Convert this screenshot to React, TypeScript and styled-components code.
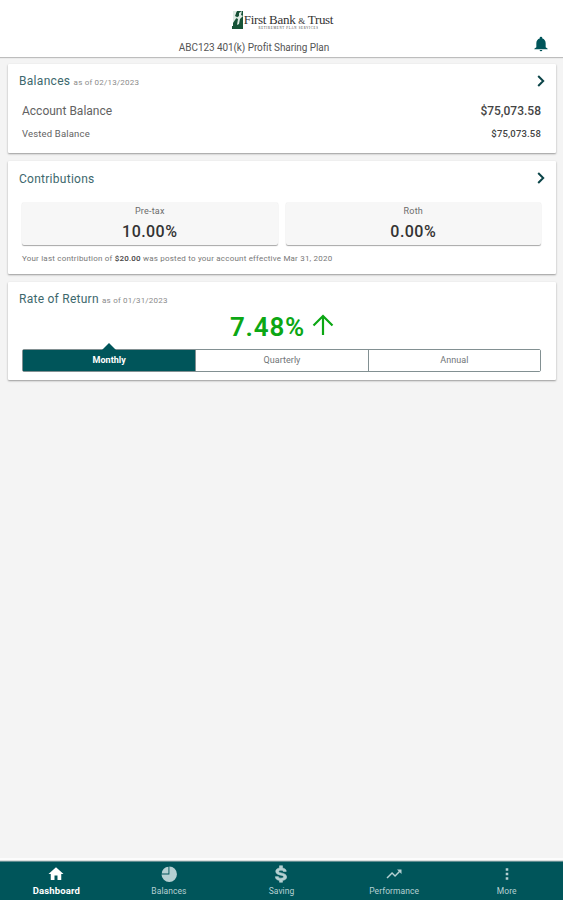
import React from "react";
import styled, { createGlobalStyle } from "styled-components";

const teal = "#00555a";

const GlobalStyle = createGlobalStyle`
  * { box-sizing: border-box; }
  body { margin: 0; background: #f4f4f4; font-family: Roboto, "Liberation Sans", sans-serif; }
`;

const Page = styled.div`
  display: flex;
  flex-direction: column;
  height: 100vh;
  min-height: 900px;
  background: #f4f4f4;
  color: #555;
`;

const Header = styled.header`
  height: 57px;
  flex: none;
  padding-top: 9px;
  background: #fff;
  box-shadow: 0 1px 1px #bdbdbd;
`;

const Brand = styled.div`
  display: flex;
  justify-content: center;
  height: 22px;
  padding-left: 2px;
`;

const BrandMark = styled.svg`
  width: 12px;
  height: 20px;
  margin-top: 1px;
`;

const BrandWords = styled.div`
  display: flex;
  flex-direction: column;
  align-items: center;
  width: 90px;
  font-family: "Liberation Serif", serif;
  color: #333;
`;

const BrandName = styled.div`
  font-size: 13px;
  line-height: 15px;
  margin-top: 3px;
  letter-spacing: -0.3px;
  white-space: nowrap;
  small { font-size: 9px; }
`;

const BrandLine = styled.div`
  font-size: 3px;
  line-height: 3px;
  margin-top: -2px;
  letter-spacing: 0.75px;
  white-space: nowrap;
`;

const PlanRow = styled.div`
  display: grid;
  grid-template-columns: 508px 1fr;
  align-items: center;
  margin-top: 5px;
  height: 18px;
`;

const PlanName = styled.div`
  text-align: center;
  font-size: 10px;
  line-height: 12px;
  margin-top: 5px;
  letter-spacing: -0.08px;
`;

const Bell = styled.svg`
  width: 16px;
  height: 16px;
  margin: -3px 0 0 25px;
`;

const Cards = styled.main`
  flex: 1;
  display: flex;
  flex-direction: column;
  gap: 8px;
  padding: 7px 7px 0 8px;
`;

const Card = styled.section<{ $height: number }>`
  height: ${(p) => p.$height}px;
  padding: 9px 15px 0 11px;
  border-radius: 1px;
  background: #fff;
  box-shadow: 0 1px 2px rgba(0, 0, 0, 0.38);
`;

const CardHead = styled.div`
  display: flex;
  align-items: center;
  justify-content: space-between;
  height: 17px;
`;

const Title = styled.h2<{ $spacing: number }>`
  margin: 0;
  font-size: 12px;
  line-height: 16px;
  font-weight: 400;
  letter-spacing: ${(p) => p.$spacing}px;
  color: #3d686d;
`;

const AsOf = styled.span`
  font-size: 8px;
  letter-spacing: 0.2px;
  color: #8b8b8b;
`;

const Chevron = styled.svg`
  width: 8px;
  height: 12px;
  margin: -1px -4px 0 0;
`;

const Line = styled.div<{ $size: number; $top: number; $spacing: number }>`
  display: flex;
  justify-content: space-between;
  margin: ${(p) => p.$top}px 0 0 3px;
  font-size: ${(p) => p.$size}px;
  line-height: 16px;
  letter-spacing: ${(p) => p.$spacing}px;
  color: #626262;
  b { font-weight: 500; color: #444; }
`;

const Tiles = styled.div`
  display: grid;
  grid-template-columns: 1fr 1fr;
  gap: 8px;
  margin: 15px 0 0 3px;
`;

const Tile = styled.div`
  height: 43px;
  padding-top: 3px;
  border-radius: 2px;
  background: #f7f7f7;
  box-shadow: 0 1px 1px rgba(0, 0, 0, 0.35);
  text-align: center;
`;

const TileLabel = styled.div`
  font-size: 9px;
  line-height: 13px;
  letter-spacing: 0.2px;
  color: #6b6b6b;
`;

const TileValue = styled.div`
  font-size: 16px;
  line-height: 20px;
  margin-top: 4px;
  font-weight: 500;
  letter-spacing: 0.45px;
  color: #333;
`;

const Note = styled.p`
  margin: 8px 0 0 3px;
  font-size: 8px;
  line-height: 12px;
  letter-spacing: 0.2px;
  color: #777;
  b { font-weight: 500; color: #444; }
`;

const Rate = styled.div`
  display: flex;
  justify-content: center;
  align-items: center;
  gap: 7px;
  height: 30px;
  margin: 4px 0 0 4px;
  font-size: 26px;
  font-weight: 600;
  letter-spacing: 0.8px;
  color: #0ca714;
`;

const RateArrow = styled.svg`
  width: 22px;
  height: 22px;
  margin-top: -5px;
`;

const Segments = styled.div`
  display: grid;
  grid-template-columns: 1fr 1fr 1fr;
  height: 23px;
  margin: 7px 0 0 3px;
  border: 1px solid #829092;
  border-radius: 2px;
`;

const Segment = styled.div<{ $active?: boolean }>`
  position: relative;
  text-align: center;
  font-size: 9px;
  line-height: 21px;
  letter-spacing: 0.04px;
  font-weight: ${(p) => (p.$active ? 700 : 400)};
  color: ${(p) => (p.$active ? "#fff" : "#707577")};
  background: ${(p) => (p.$active ? teal : "#fff")};
  & + & { border-left: 1px solid #829092; }
`;

const Pointer = styled.i`
  position: absolute;
  top: -7px;
  left: calc(50% - 7px);
  border: 7px solid transparent;
  border-top: 0;
  border-bottom-color: ${teal};
`;

const Nav = styled.nav`
  display: grid;
  grid-template-columns: repeat(5, 1fr);
  flex: none;
  height: 39px;
  background: ${teal};
  border-top: 1px solid #5f8c90;
  box-shadow: 0 -1px 0 #d9dedd, 0 -3px 0 #fcfcfc;
`;

const NavItem = styled.div<{ $active?: boolean }>`
  display: flex;
  flex-direction: column;
  align-items: center;
  padding-top: 3px;
  font-size: ${(p) => (p.$active ? 9.5 : 8.5)}px;
  line-height: 12px;
  letter-spacing: ${(p) => (p.$active ? 0.15 : 0.05)}px;
  font-weight: ${(p) => (p.$active ? 700 : 400)};
  color: ${(p) => (p.$active ? "#fff" : "#b5d0d2")};
  svg { width: 18px; height: 18px; fill: currentColor; margin-bottom: 2px; }
`;

const icons = {
  home: "M10 20v-6h4v6h5v-8h3L12 3 2 12h3v8z",
  dollar:
    "M10 1h4v3c3 .5 5 2 5 4.500h-4c0-1-1-1.500-3-1.500s-3 .5-3 1.500 1 1.500 3 2c4 .8 7.500 2 7.500 5.500 0 2.500-2 4-5.500 4.500v2.500h-4v-2.500c-3.500-.5-5.500-2.200-5.500-5h4c0 1.200 1.200 2 3.500 2s3.500-.6 3.500-1.700c0-1.200-1-1.700-3.500-2.200C8 12.800 5 11.700 5 8.500 5 6 7 4.500 10 4z",
  pie: "M12.500 2v10.500H2a10.300 10.300 0 1 0 10.500-10.500zM11.300 2.300v9H2.300a9.500 9.500 0 0 1 9-9z",
  trend: "M16 6l2.290 2.290-4.880 4.880-4-4L2 16.590 3.410 18l6-6 4 4 6.300-6.290L22 12V6z",
  dots: "M10.300 4.300h3.400v3.400h-3.400zm0 6h3.400v3.400h-3.400zm0 6h3.400v3.400h-3.400z",
};

const Icon = ({ name }: { name: keyof typeof icons }) => (
  <svg viewBox="0 0 24 24" stroke="currentColor" strokeWidth={name === "dollar" ? 0.8 : 0}>
    <path d={icons[name]} />
  </svg>
);

const Forward = () => (
  <Chevron viewBox="0 0 8 12" fill="none" stroke="#0c4549" strokeWidth="2">
    <path d="M1.200 1l5 5-5 5" />
  </Chevron>
);

export default function App() {
  return (
    <Page>
      <GlobalStyle />
      <Header>
        <Brand>
          <BrandMark viewBox="0 0 12 20">
            <path d="M1 1h10v15H1zM0 16h11v3H0z" fill="#175438" />
            <path d="M1 1h4L3 6l2 1-4 6zM7 3l3-2-1 4 2 1-3 3-1 5-2 1 1-6-2-1 3-2z" fill="#dfebe4" />
            <path d="M4 3l3-2-2 6z" fill="#174c35" />
          </BrandMark>
          <BrandWords>
            <BrandName>First Bank <small>&amp;</small> Trust</BrandName>
            <BrandLine>RETIREMENT PLAN SERVICES</BrandLine>
          </BrandWords>
        </Brand>
        <PlanRow>
          <PlanName>ABC123 401(k) Profit Sharing Plan</PlanName>
          <Bell viewBox="0 0 24 24" fill={teal}>
            <path d="M12 23a2 2 0 0 0 2-2h-4a2 2 0 0 0 2 2zm7-6v-6c0-4-2-6.500-5-7.300V3a2 2 0 0 0-4 0v.7C7 4.500 5 7 5 11v6l-3 2v1h20v-1z" />
          </Bell>
        </PlanRow>
      </Header>
      <Cards>
        <Card $height={89}>
          <CardHead>
            <Title $spacing={0.3}>Balances <AsOf>as of 02/13/2023</AsOf></Title>
            <Forward />
          </CardHead>
          <Line $size={12} $top={13} $spacing={0}><span>Account Balance</span><b>$75,073.58</b></Line>
          <Line $size={9.5} $top={7} $spacing={0.17}><span>Vested Balance</span><b>$75,073.58</b></Line>
        </Card>
        <Card $height={113}>
          <CardHead>
            <Title $spacing={0.27}>Contributions</Title>
            <Forward />
          </CardHead>
          <Tiles>
            <Tile><TileLabel>Pre-tax</TileLabel><TileValue>10.00%</TileValue></Tile>
            <Tile><TileLabel>Roth</TileLabel><TileValue>0.00%</TileValue></Tile>
          </Tiles>
          <Note>Your last contribution of <b>$20.00</b> was posted to your account effective Mar 31, 2020</Note>
        </Card>
        <Card $height={98}>
          <CardHead>
            <Title $spacing={0.26}>Rate of Return <AsOf>as of 01/31/2023</AsOf></Title>
          </CardHead>
          <Rate>
            7.48%
            <RateArrow viewBox="0 0 22 22" fill="none" stroke="#0ca714" strokeWidth="2.200">
              <path d="M11 21V2M1.500 11.500L11 2l9.500 9.500" />
            </RateArrow>
          </Rate>
          <Segments>
            <Segment $active><Pointer />Monthly</Segment>
            <Segment>Quarterly</Segment>
            <Segment>Annual</Segment>
          </Segments>
        </Card>
      </Cards>
      <Nav>
        <NavItem $active><Icon name="home" />Dashboard</NavItem>
        <NavItem><Icon name="pie" />Balances</NavItem>
        <NavItem><Icon name="dollar" />Saving</NavItem>
        <NavItem><Icon name="trend" />Performance</NavItem>
        <NavItem><Icon name="dots" />More</NavItem>
      </Nav>
    </Page>
  );
}
